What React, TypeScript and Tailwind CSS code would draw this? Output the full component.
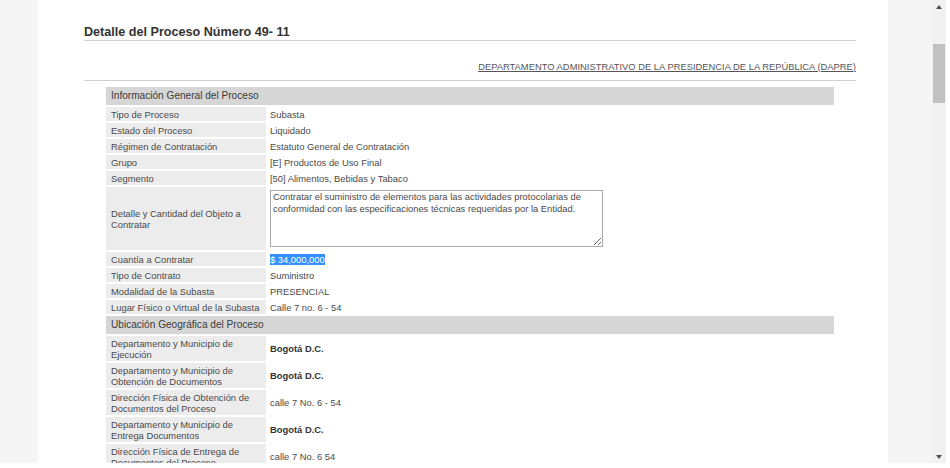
const generalRows: [string, string][] = [
  ['Tipo de Proceso', 'Subasta'],
  ['Estado del Proceso', 'Liquidado'],
  ['Régimen de Contratación', 'Estatuto General de Contratación'],
  ['Grupo', '[E] Productos de Uso Final'],
  ['Segmento', '[50] Alimentos, Bebidas y Tabaco'],
];

const afterRows: [string, string][] = [
  ['Tipo de Contrato', 'Suministro'],
  ['Modalidad de la Subasta', 'PRESENCIAL'],
  ['Lugar Físico o Virtual de la Subasta', 'Calle 7 no. 6 - 54'],
];

const geoRows: { label: string; value: string; bold: boolean }[] = [
  { label: 'Departamento y Municipio de Ejecución', value: 'Bogotá D.C.', bold: true },
  { label: 'Departamento y Municipio de Obtención de Documentos', value: 'Bogotá D.C.', bold: true },
  { label: 'Dirección Física de Obtención de Documentos del Proceso', value: 'calle 7 No. 6 - 54', bold: false },
  { label: 'Departamento y Municipio de Entrega Documentos', value: 'Bogotá D.C.', bold: true },
  { label: 'Dirección Física de Entrega de Documentos del Proceso', value: 'calle 7 No. 6 54', bold: false },
];

const labelCls = 'w-[160px] bg-[#ececec] pl-[5px] pr-[4px] py-[1.5px] align-middle text-left font-normal';
const valueCls = 'pl-[2px] py-[1.5px] align-middle';

const SectionHeader = ({ title }: { title: string }) => (
  <tr>
    <td colSpan={2} className="bg-[#d6d6d6] pl-[5px] py-[3px] text-[10.1px] leading-[12px] text-[#3a3a3a]">
      {title}
    </td>
  </tr>
);

const App = () => {
  return (
    <div className="w-[950px] h-[468px] bg-white flex items-start font-['Liberation_Sans',Arial,sans-serif] text-[#4a4a4a]">
      <div className="w-[932px] h-[463px] bg-[#f5f5f5] overflow-hidden pl-[38px]">
        <div className="w-[850px] h-full bg-white pl-[46px] pr-[32px] pt-[25px]">
          {/* Title */}
          <h1 className="text-[12.6px] leading-[15px] font-bold text-[#333] border-b border-[#cfcfcf]">
            Detalle del Proceso Número 49- 11
          </h1>

          {/* Entity link */}
          <div className="pt-[19.5px] pb-[8.5px] text-right text-[9.4px] leading-[11px] border-b border-[#cfcfcf]">
            <a className="underline text-[#555]">
              DEPARTAMENTO ADMINISTRATIVO DE LA PRESIDENCIA DE LA REPÚBLICA (DAPRE)
            </a>
          </div>

          {/* Detail table */}
          <div className="px-[20px] mt-[4px]">
            <table className="w-full border-separate border-spacing-[2px] text-[9.4px] leading-[11px]">
              <tbody>
                <SectionHeader title="Información General del Proceso" />
                {generalRows.map(([label, value]) => (
                  <tr key={label}>
                    <td className={labelCls}>{label}</td>
                    <td className={valueCls}>{value}</td>
                  </tr>
                ))}
                <tr>
                  <td className={labelCls}>Detalle y Cantidad del Objeto a Contratar</td>
                  <td className={valueCls}>
                    <textarea
                      readOnly
                      className="block w-[333px] h-[57px] my-[1.5px] border border-[#a9a9a9] px-[2px] pt-0 text-[9.4px] leading-[12px] text-[#4a4a4a] outline-none"
                      defaultValue="Contratar el suministro de elementos para las actividades protocolarias de conformidad con las especificaciones técnicas requeridas por la Entidad."
                    />
                  </td>
                </tr>
                <tr>
                  <td className={labelCls}>Cuantía a Contratar</td>
                  <td className={valueCls}>
                    <span className="bg-[#3390ff] text-white">$ 34,000,000</span>
                  </td>
                </tr>
                {afterRows.map(([label, value]) => (
                  <tr key={label}>
                    <td className={labelCls}>{label}</td>
                    <td className={valueCls}>{value}</td>
                  </tr>
                ))}
                <SectionHeader title="Ubicación Geográfica del Proceso" />
                {geoRows.map((row) => (
                  <tr key={row.label}>
                    <td className={labelCls}>{row.label}</td>
                    <td className={`${valueCls} ${row.bold ? 'font-bold text-[#333]' : ''}`}>{row.value}</td>
                  </tr>
                ))}
              </tbody>
            </table>
          </div>
        </div>
      </div>

      {/* Scrollbar */}
      <div className="relative w-[14px] h-[463px] bg-[#f1f1f1]">
        <div className="absolute left-[3.5px] top-[5px] w-0 h-0 border-x-[3.5px] border-x-transparent border-b-[4px] border-b-[#505050]" />
        <div className="absolute left-[1px] top-[44px] w-[12px] h-[59px] bg-[#c1c1c1]" />
        <div className="absolute left-[3.5px] top-[455px] w-0 h-0 border-x-[3.5px] border-x-transparent border-t-[4px] border-t-[#505050]" />
      </div>
    </div>
  );
};

export default App;
